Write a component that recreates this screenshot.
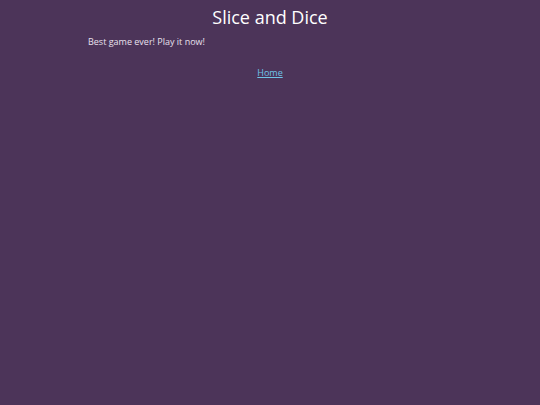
export default function App() {
  return (
    <div className="min-h-[405px] w-full bg-[#4c3459] text-white" style={{ fontFamily: '"Open Sans", "DejaVu Sans", sans-serif' }}>
      <h1 className="pt-[5px] text-center text-[18px] leading-[24px] text-white">Slice and Dice</h1>
      <p className="mt-[7px] pl-[88px] text-[9px] leading-[12px] text-[#e8e0ee]">Best game ever! Play it now!</p>
      <div className="mt-[19px] text-center text-[9px] leading-[12px]">
        <a href="#" className="text-[#6fc3e8] underline">Home</a>
      </div>
    </div>
  );
}
